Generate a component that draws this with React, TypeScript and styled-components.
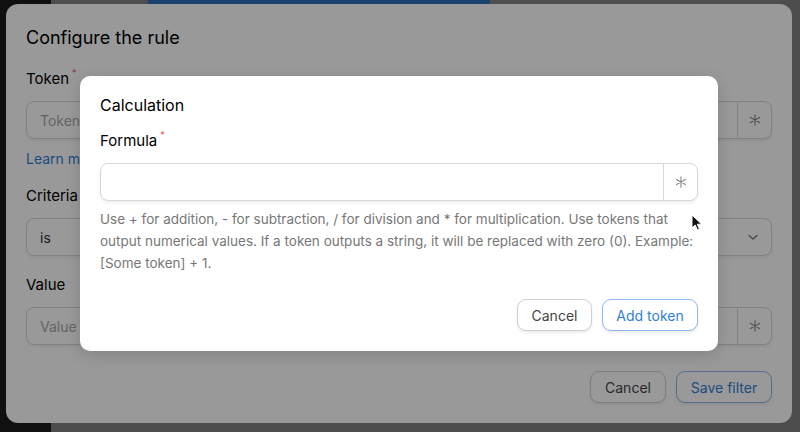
import React from "react";
import styled, { createGlobalStyle } from "styled-components";

const Global = createGlobalStyle`
  html, body {
    margin: 0;
    padding: 0;
    background: #4d4d4d;
  }
  * {
    box-sizing: border-box;
  }
`;

const FONT = `Inter, "Noto Sans", "Liberation Sans", sans-serif`;

const Page = styled.div`
  position: relative;
  width: 800px;
  height: 432px;
  overflow: hidden;
  padding: 4px 8px 9px 6px;
  font-family: ${FONT};
  background:
    linear-gradient(#2a6fb8, #2a6fb8) 148px 0 / 342px 4px no-repeat,
    linear-gradient(to right, #1c1c1c 0 51px, #808080 51px);
`;

const Sheet = styled.div`
  height: 100%;
  background: #fff;
  border-radius: 12px;
  padding: 22px 20px 20px;
  display: flex;
  flex-direction: column;
`;

const SheetTitle = styled.h2`
  margin: 0 0 13px;
  font-size: 18px;
  line-height: 24px;
  font-weight: 400;
  color: #000;
`;

const Label = styled.div`
  font-size: 15px;
  line-height: 20px;
  font-weight: 400;
  color: #000;
  margin-bottom: 12px;
`;

const Req = styled.sup`
  color: #e0524f;
  font-size: 9px;
  margin-left: 3px;
  vertical-align: 8px;
`;

const Field = styled.div<{ $mb?: number }>`
  display: flex;
  height: 38px;
  border: 1px solid #d8d8d8;
  border-radius: 8px;
  background: #fff;
  box-shadow: 0 2px 3px rgba(0, 0, 0, 0.06);
  margin-bottom: ${(p) => p.$mb ?? 0}px;
  overflow: hidden;
`;

const FieldText = styled.div<{ $muted?: boolean }>`
  flex: 1;
  display: flex;
  align-items: center;
  padding: 0 13px;
  font-size: 14px;
  color: ${(p) => (p.$muted ? "#a8a8a8" : "#333")};
`;

const AddonButton = styled.div`
  width: 34px;
  border-left: 1px solid #d8d8d8;
  display: flex;
  align-items: center;
  justify-content: center;
  color: #888;
`;

const Chevron = styled.div`
  width: 36px;
  display: flex;
  align-items: center;
  justify-content: center;
  color: #777;
`;

const Link = styled.div`
  font-size: 14px;
  line-height: 18px;
  color: #2f7fd8;
  margin: 11px 0 18px;
`;

const Footer = styled.div`
  margin-top: auto;
  display: flex;
  justify-content: flex-end;
  gap: 10px;
`;

const Button = styled.button<{ $primary?: boolean; $w: number }>`
  width: ${(p) => p.$w}px;
  height: 32px;
  border-radius: 9px;
  border: 1px solid ${(p) => (p.$primary ? "#8fb8ec" : "#cfcfcf")};
  background: #fff;
  color: ${(p) => (p.$primary ? "#2f7fd8" : "#444")};
  font-family: ${FONT};
  font-size: 14px;
  box-shadow: 0 2px 3px rgba(0, 0, 0, 0.08);
  padding: 0;
`;

const Dim = styled.div`
  position: absolute;
  inset: 0;
  background: rgba(0, 0, 0, 0.4);
`;

const Modal = styled.div`
  position: absolute;
  left: 80px;
  top: 76px;
  width: 638px;
  height: 275px;
  background: #fff;
  border-radius: 10px;
  padding: 19px 20px 20px;
  display: flex;
  flex-direction: column;
  box-shadow: 0 4px 16px rgba(0, 0, 0, 0.15);
`;

const ModalTitle = styled.h3`
  margin: 0 0 10px;
  font-size: 16px;
  line-height: 20px;
  font-weight: 400;
  color: #000;
`;

const Help = styled.p`
  margin: 7px 0 0;
  max-width: 596px;
  font-size: 13.5px;
  line-height: 22px;
  color: #777;
`;

const Cursor = styled.svg`
  position: absolute;
  left: 691px;
  top: 214px;
`;

const Asterisk = () => (
  <svg width="12" height="12" viewBox="0 0 12 12" fill="none" stroke="currentColor" strokeWidth="1.1" strokeLinecap="round">
    <path d="M6 0.8v10.4M1.5 3.4l9 5.2M10.5 3.4l-9 5.2" />
  </svg>
);

const ChevronDown = () => (
  <svg width="12" height="8" viewBox="0 0 12 8" fill="none" stroke="currentColor" strokeWidth="1.3" strokeLinecap="round" strokeLinejoin="round">
    <path d="M2 2.5l4 3.5 4-3.5" />
  </svg>
);

export default function App() {
  return (
    <>
      <Global />
      <Page>
        <Sheet>
          <SheetTitle>Configure the rule</SheetTitle>
          <Label>
            Token<Req>*</Req>
          </Label>
          <Field>
            <FieldText $muted>Token</FieldText>
            <AddonButton>
              <Asterisk />
            </AddonButton>
          </Field>
          <Link>Learn more</Link>
          <Label>Criteria</Label>
          <Field $mb={19}>
            <FieldText>is</FieldText>
            <Chevron>
              <ChevronDown />
            </Chevron>
          </Field>
          <Label>Value</Label>
          <Field>
            <FieldText $muted>Value</FieldText>
            <AddonButton>
              <Asterisk />
            </AddonButton>
          </Field>
          <Footer>
            <Button $w={76}>Cancel</Button>
            <Button $w={96} $primary>
              Save filter
            </Button>
          </Footer>
        </Sheet>
        <Dim />
        <Modal>
          <ModalTitle>Calculation</ModalTitle>
          <Label>
            Formula<Req>*</Req>
          </Label>
          <Field>
            <FieldText />
            <AddonButton>
              <Asterisk />
            </AddonButton>
          </Field>
          <Help>
            Use + for addition, - for subtraction, / for division and * for multiplication. Use tokens that
            output numerical values. If a token outputs a string, it will be replaced with zero (0). Example:
            [Some token] + 1.
          </Help>
          <Footer>
            <Button $w={75}>Cancel</Button>
            <Button $w={96} $primary>
              Add token
            </Button>
          </Footer>
        </Modal>
        <Cursor width="12" height="18" viewBox="0 0 12 18">
          <path d="M1 1v13l3.2-3 2.3 5 2-0.9-2.2-4.9h4.4z" fill="#111" stroke="#fff" strokeWidth="1" />
        </Cursor>
      </Page>
    </>
  );
}
